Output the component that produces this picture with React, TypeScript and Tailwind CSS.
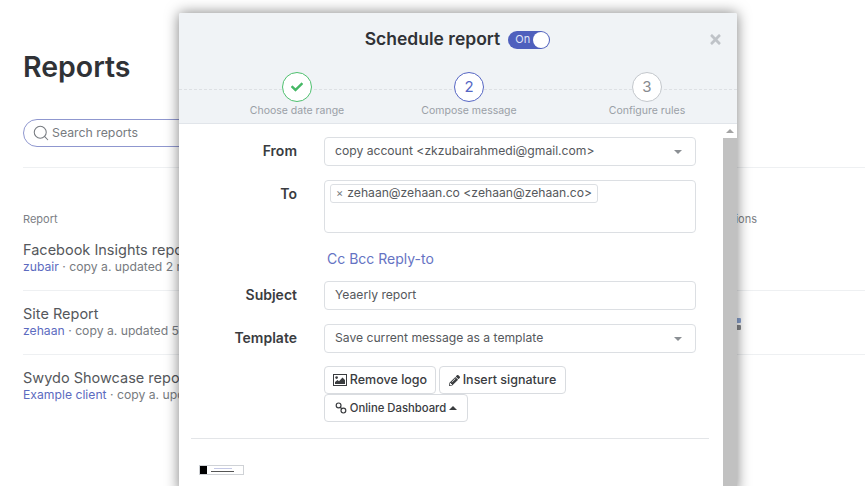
import React from "react";
import { Search } from "lucide-react";
import { FaCheck, FaTimes, FaPencilAlt } from "react-icons/fa";

const reports = [
  { name: "Facebook Insights report", client: "zubair", meta: " · copy a. updated 2 months" },
  { name: "Site Report", client: "zehaan", meta: " · copy a. updated 5 months" },
  { name: "Swydo Showcase report", client: "Example client", meta: " · copy a. updated" },
];

function Caret() {
  return <span className="ml-auto mr-[3px] h-0 w-0 border-x-[4px] border-t-[4px] border-x-transparent border-t-[#8b8f94]" />;
}

function Row({ label, children, className }: { label: string; children: React.ReactNode; className?: string }) {
  return (
    <div className={"flex items-start " + (className ?? "")}>
      <label className="w-[118px] pt-[4px] text-right text-[14px] leading-[20px] font-semibold text-[#3a3c3f]">{label}</label>
      <div className="ml-[27px] w-[372px]">{children}</div>
    </div>
  );
}

function Step({ label, children, circle, className }: { label: string; children: React.ReactNode; circle: string; className?: string }) {
  return (
    <div className={"flex w-[172px] flex-col items-center " + (className ?? "")}>
      <div className={"z-10 flex h-[30px] w-[30px] items-center justify-center rounded-full bg-white text-[15px] border " + circle}>
        {children}
      </div>
      <span className="mt-[1px] whitespace-nowrap text-[10.5px] leading-[16px] text-[#9a9fa6]">{label}</span>
    </div>
  );
}

function Btn({ icon, label, caret, className }: { icon: React.ReactNode; label: string; caret?: boolean; className?: string }) {
  return (
    <button className={"flex h-[28px] items-center justify-center gap-[3px] rounded border border-[#d9dce0] bg-white font-medium text-[#3a3c3f] " + (className ?? "")}>
      {icon}
      {label}
      {caret && <span className="h-0 w-0 border-x-[4px] border-b-[4px] border-x-transparent border-b-[#3a3c3f]" />}
    </button>
  );
}

function PictureIcon() {
  return (
    <svg width="14" height="12" viewBox="0 0 14 12" fill="none">
      <rect x="0.5" y="0.5" width="13" height="11" fill="#fff" stroke="#3a3c3f" />
      <circle cx="3.6" cy="3.6" r="1.3" fill="#3a3c3f" />
      <path d="M2 10V8l2.5-2 1.5 1.2L9.5 3.5 12 6v4z" fill="#3a3c3f" />
    </svg>
  );
}

function ChainIcon() {
  return (
    <svg width="12" height="12" viewBox="0 0 12 12" fill="none" stroke="#3a3c3f" strokeWidth="1.2">
      <circle cx="3.6" cy="3.4" r="2.4" />
      <circle cx="8.4" cy="8.6" r="2.4" />
      <path d="M5 5l2 2" />
    </svg>
  );
}

export default function App() {
  return (
    <div className="relative h-[486px] w-[865px] overflow-hidden bg-white font-['Inter',sans-serif]">
      {/* page behind the dialog */}
      <div className="pl-[23px] pt-[49px]">
        <h1 className="text-[28.5px] leading-[36px] font-semibold text-[#303236]">Reports</h1>
        <div className="mt-[34px] flex h-[28px] w-[300px] items-center rounded-full border border-[#8f97cf] pl-[8px] text-[#777b80]">
          <Search size={18} strokeWidth={1.4} />
          <span className="ml-[2px] text-[12.3px]">Search reports</span>
        </div>
        <div className="mt-[20px] h-[1px] bg-[#eef0f2]" />
        <div className="mt-[44px] flex justify-between pr-[108px] text-[11px] leading-[14px] text-[#7c8085]">
          <span>Report</span>
          <span>Actions</span>
        </div>
        <div className="mt-[1px]">
          {reports.map((r, i) => (
            <div key={r.name} className={"h-[64px] pt-[13px] " + (i < 2 ? "border-b border-[#eef0f2]" : "")}>
              <div className="text-[14.5px] leading-[19px] text-[#55585c]">{r.name}</div>
              <div className="text-[12.2px] leading-[16px] text-[#777b80]">
                <span className="text-[#5c6bc0]">{r.client}</span>
                {r.meta}
              </div>
            </div>
          ))}
        </div>
      </div>
      {/* action icon peeking out from under the dialog */}
      <div className="absolute left-[735px] top-[318px] flex h-[13px] w-[6px] flex-col gap-[2px] opacity-70">
        <span className="h-[5px] rounded-[1px] bg-[#5c7fc0]" />
        <span className="h-[5px] rounded-[1px] bg-[#55585c]" />
      </div>

      {/* dialog */}
      <div className="absolute left-[179px] top-[13px] flex h-[480px] w-[558px] flex-col overflow-hidden rounded-t-[2px] bg-white shadow-[0_0_14px_rgba(0,0,0,0.5)]">
        <div className="relative h-[111px] shrink-0 border-b border-[#e1e5ea] bg-[#f0f3f6]">
          <div className="flex h-[53px] items-center justify-center pr-[1px]">
            <span className="text-[17.5px] font-semibold text-[#303236]">Schedule report</span>
            <span className="ml-[8px] flex h-[18px] w-[42px] items-center justify-between rounded-full bg-[#4f60bd] pl-[7px] pr-[1px] text-[11px] text-[#dfe3f7]">
              On
              <span className="h-[16px] w-[16px] rounded-full bg-white" />
            </span>
          </div>
          <FaTimes size={15} className="absolute right-[14px] top-[19px] text-[#bfc3c8]" />
          <div className="absolute left-0 right-0 top-[76px] border-t border-dashed border-[#dde0e4]" />
          <div className="absolute left-[32px] top-[59px] flex">
            <Step label="Choose date range" circle="border-[#4fc06f] border-[1.5px]">
              <FaCheck size={12} className="text-[#46b866]" />
            </Step>
            <Step label="Compose message" circle="border-[#5666c4] border-[1.5px] text-[#5666c4]">2</Step>
            <Step label="Configure rules" circle="border-[#c3c7cc] text-[#878b90]" className="ml-[6px]">3</Step>
          </div>
        </div>

        <div className="flex min-h-0 flex-1">
          <div className="w-[544px] shrink-0 pt-[13px] text-[12.15px] text-[#55585c]">
            <Row label="From">
              <div className="flex h-[29px] items-center rounded border border-[#dcdfe3] pl-[10px] pr-[10px]">
                copy account &lt;zkzubairahmedi@gmail.com&gt;
                <Caret />
              </div>
            </Row>
            <Row label="To" className="mt-[14px]">
              <div className="flex h-[53px] items-start rounded border border-[#dcdfe3] pl-[5px] pt-[3px]">
                <span className="flex h-[19px] items-center rounded-[3px] border border-[#dcdfe3] pl-[5px] pr-[5px]">
                  <span className="mr-[4px] text-[11px] text-[#777b80]">×</span>
                  zehaan@zehaan.co &lt;zehaan@zehaan.co&gt;
                </span>
              </div>
            </Row>
            <div className="ml-[148px] mt-[17px] text-[14px] leading-[18px] text-[#6573c3]">Cc Bcc Reply-to</div>
            <Row label="Subject" className="mt-[13px]">
              <div className="flex h-[29px] items-center rounded border border-[#dcdfe3] pl-[10px]">Yeaerly report</div>
            </Row>
            <Row label="Template" className="mt-[14px]">
              <div className="flex h-[29px] items-center rounded border border-[#dcdfe3] pl-[10px] pr-[10px]">
                Save current message as a template
                <Caret />
              </div>
            </Row>
            <div className="ml-[145px] mt-[13px] w-[372px]">
              <div className="flex gap-[3px]">
                <Btn className="w-[112px] text-[12.5px]" icon={<PictureIcon />} label="Remove logo" />
                <Btn className="w-[127px] text-[12.5px]" icon={<FaPencilAlt size={11} />} label="Insert signature" />
              </div>
              <Btn className="w-[144px] text-[11.3px]" icon={<ChainIcon />} label="Online Dashboard" caret />
            </div>
            <div className="ml-[12px] mr-[14px] mt-[16px] h-[1px] bg-[#e3e5e8]" />
            <div className="ml-[20px] mt-[26px] flex h-[10px] w-[45px] items-center border border-[#cfd2d6]">
              <span className="h-full w-[7px] bg-black" />
              <span className="ml-[4px] flex flex-col gap-[2px]">
                <span className="ml-[3px] h-[1px] w-[18px] bg-[#c5c9e6]" />
                <span className="h-[1px] w-[23px] bg-[#555555]" />
              </span>
            </div>
          </div>
          <div className="flex w-[14px] shrink-0 flex-col">
            <div className="flex h-[14px] items-center justify-center">
              <span className="h-0 w-0 border-x-[4px] border-b-[4px] border-x-transparent border-b-[#a3a3a3]" />
            </div>
            <div className="flex-1 bg-[#c1c1c1]" />
          </div>
        </div>
      </div>
    </div>
  );
}
